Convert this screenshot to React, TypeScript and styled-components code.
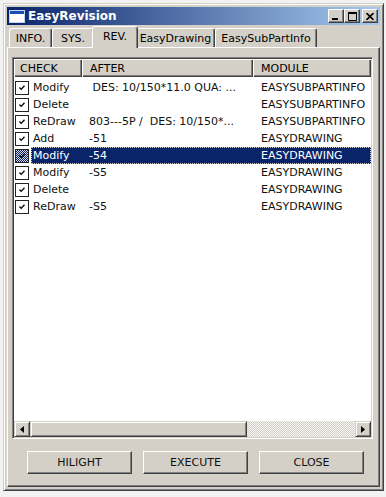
import React from 'react'
import styled, { createGlobalStyle } from 'styled-components'

const GlobalStyle = createGlobalStyle`
  html, body {
    margin: 0;
    padding: 0;
    background: #f2f2f2;
  }

  body {
    font-family: "DejaVu Sans", "Liberation Sans", sans-serif;
    font-size: 11px;
    color: #000;
  }

  * {
    box-sizing: border-box;
  }
`

const Window = styled.div`
  margin: 3px 0 0 3px;
  width: 381px;
  height: 488px;
  display: flex;
  flex-direction: column;
  padding: 3px;
  background: #d4d0c8;
  border: 1px solid;
  border-color: #d4d0c8 #404040 #404040 #d4d0c8;
  box-shadow: inset 1px 1px #fff, inset -1px -1px #808080;
`

const TitleBar = styled.div`
  height: 18px;
  display: flex;
  align-items: center;
  padding: 0 2px;
  background: linear-gradient(to right, #0a246a, #a6caf0);
  color: #fff;
`

const TitleIcon = styled.svg`
  width: 16px;
  height: 13px;
  flex-shrink: 0;
`

const TitleText = styled.span`
  margin-left: 3px;
  font-size: 12px;
  font-weight: bold;
  flex: 1;
`

const TitleButton = styled.div<{ $gap?: boolean }>`
  width: 16px;
  height: 14px;
  margin-left: ${p => (p.$gap ? '2px' : '0')};
  display: flex;
  align-items: center;
  justify-content: center;
  background: #d4d0c8;
  border: 1px solid;
  border-color: #fff #404040 #404040 #fff;
  box-shadow: inset -1px -1px #808080;
`

const TabsRow = styled.div`
  height: 21px;
  margin-top: 1px;
  display: flex;
  align-items: flex-end;
  padding-left: 2px;
`

const Tab = styled.div<{ $width: number; $active?: boolean }>`
  position: relative;
  width: ${p => p.$width + (p.$active ? 4 : 0)}px;
  height: ${p => (p.$active ? 22 : 19)}px;
  margin: 0 ${p => (p.$active ? '-2px' : '0')};
  margin-bottom: ${p => (p.$active ? '-1px' : '0')};
  z-index: ${p => (p.$active ? 1 : 0)};
  display: flex;
  justify-content: center;
  padding-top: 3px;
  background: #d4d0c8;
  border: 1px solid;
  border-bottom: none;
  border-color: #fff #404040 transparent #fff;
  border-radius: 3px 3px 0 0;
  box-shadow: inset -1px 0 #808080;
  white-space: nowrap;
`

const Panel = styled.div`
  flex: 1;
  display: flex;
  flex-direction: column;
  padding: 9px 6px 0 4px;
  border: 1px solid;
  border-color: #fff #404040 #404040 #fff;
  box-shadow: inset -1px -1px #808080;
`

const ListView = styled.div`
  height: 382px;
  display: flex;
  flex-direction: column;
  background: #fff;
  border: 1px solid;
  border-color: #808080 #fff #fff #808080;
  box-shadow: inset 1px 1px #404040, inset -1px -1px #d4d0c8;
  padding: 1px;
`

const HeaderRow = styled.div`
  display: grid;
  grid-template-columns: 68px 171px 118px;
  height: 18px;
`

const HeaderCell = styled.div<{ $pad: number }>`
  display: flex;
  align-items: center;
  padding-left: ${p => p.$pad}px;
  background: #d4d0c8;
  box-shadow: inset 1px 1px #fff, inset -1px -1px #404040, inset -2px -2px #808080;
`

const Rows = styled.div`
  flex: 1;
  padding-top: 2px;
`

const Row = styled.div`
  display: flex;
  height: 17px;
`

const CheckCell = styled.div`
  width: 17px;
  display: flex;
  align-items: center;
  padding-left: 1px;
`

const CheckBox = styled.div<{ $focus?: boolean }>`
  width: 14px;
  height: 14px;
  display: flex;
  align-items: center;
  justify-content: center;
  border: 1px solid #222;
  background: ${p =>
    p.$focus
      ? 'repeating-conic-gradient(#0a246a 0 25%, #d8d8e0 0 50%) 0 0 / 2px 2px'
      : '#fff'};
`

const RowBody = styled.div<{ $selected?: boolean }>`
  flex: 1;
  display: grid;
  grid-template-columns: 51px 171px 118px;
  align-items: center;
  background: ${p => (p.$selected ? '#0a246a' : 'transparent')};
  color: ${p => (p.$selected ? '#fff' : '#111')};
  outline: ${p => (p.$selected ? '1px dotted #d4d0c8' : 'none')};
  outline-offset: -1px;
`

const Cell = styled.div<{ $pad: number }>`
  padding-left: ${p => p.$pad}px;
  white-space: pre;
  overflow: hidden;
`

const ScrollBar = styled.div`
  height: 16px;
  display: flex;
`

const ScrollButton = styled.div`
  width: 16px;
  height: 16px;
  display: flex;
  align-items: center;
  justify-content: center;
  background: #d4d0c8;
  border: 1px solid;
  border-color: #d4d0c8 #404040 #404040 #d4d0c8;
  box-shadow: inset 1px 1px #fff, inset -1px -1px #808080;
`

const ScrollThumb = styled.div`
  width: 217px;
  background: #d4d0c8;
  border: 1px solid;
  border-color: #d4d0c8 #404040 #404040 #d4d0c8;
  box-shadow: inset 1px 1px #fff, inset -1px -1px #808080;
`

const ScrollTrack = styled.div`
  flex: 1;
  background: repeating-conic-gradient(#d4d0c8 0 25%, #f4f4f4 0 50%) 0 0 / 2px 2px;
`

const ButtonRow = styled.div`
  display: flex;
  gap: 11px;
  margin-top: 12px;
  padding-left: 15px;
`

const PushButton = styled.div`
  width: 105px;
  height: 23px;
  display: flex;
  align-items: center;
  justify-content: center;
  background: #d4d0c8;
  border: 1px solid;
  border-color: #fff #404040 #404040 #fff;
  box-shadow: inset -1px -1px #808080;
  color: #111;
`

type Item = {
  action: string
  after: string
  module: string
  selected?: boolean
}

const items: Item[] = [
  { action: 'Modify', after: ' DES: 10/150*11.0 QUA: ...', module: 'EASYSUBPARTINFO' },
  { action: 'Delete', after: '', module: 'EASYSUBPARTINFO' },
  { action: 'ReDraw', after: '803---5P /  DES: 10/150*...', module: 'EASYSUBPARTINFO' },
  { action: 'Add', after: '-51', module: 'EASYDRAWING' },
  { action: 'Modify', after: '-54', module: 'EASYDRAWING', selected: true },
  { action: 'Modify', after: '-S5', module: 'EASYDRAWING' },
  { action: 'Delete', after: '', module: 'EASYDRAWING' },
  { action: 'ReDraw', after: '-S5', module: 'EASYDRAWING' },
]

const tabs = [
  { label: 'INFO.', width: 43 },
  { label: 'SYS.', width: 42 },
  { label: 'REV.', width: 42, active: true },
  { label: 'EasyDrawing', width: 79 },
  { label: 'EasySubPartInfo', width: 102 },
]

const Check = () => (
  <svg width="6" height="6" viewBox="0 0 6 6">
    <path d="M0.5 2.5 L2.2 4.4 L5.5 0.8" stroke="#000" strokeWidth="1.3" fill="none" />
  </svg>
)

const Arrow: React.FC<{ dir: 'left' | 'right' }> = ({ dir }) => (
  <svg width="4" height="7" viewBox="0 0 4 7">
    {dir === 'left'
      ? <path d="M4 0 L0 3.5 L4 7 Z" fill="#000" />
      : <path d="M0 0 L4 3.5 L0 7 Z" fill="#000" />}
  </svg>
)

const App: React.FC = () => {
  return (
    <>
      <GlobalStyle />
      <Window>
        <TitleBar>
          <TitleIcon viewBox="0 0 16 13">
            <rect x="0.5" y="0.5" width="15" height="12" fill="#fff" stroke="#c8d4e8" />
            <rect x="1" y="1" width="14" height="3" fill="#1c4cb8" />
          </TitleIcon>
          <TitleText>EasyRevision</TitleText>
          <TitleButton>
            <svg width="8" height="8" viewBox="0 0 8 8">
              <rect x="0" y="6" width="6" height="2" fill="#000" />
            </svg>
          </TitleButton>
          <TitleButton>
            <svg width="9" height="9" viewBox="0 0 9 9">
              <path d="M0.5 1.5 H8.5 V8.5 H0.5 Z" fill="none" stroke="#000" />
              <rect x="0" y="0" width="9" height="2" fill="#000" />
            </svg>
          </TitleButton>
          <TitleButton $gap>
            <svg width="8" height="7" viewBox="0 0 8 7">
              <path d="M0.5 0 L7.5 7 M7.5 0 L0.5 7" stroke="#000" strokeWidth="1.6" />
            </svg>
          </TitleButton>
        </TitleBar>

        <TabsRow>
          {tabs.map(t => (
            <Tab key={t.label} $width={t.width} $active={t.active}>
              {t.label}
            </Tab>
          ))}
        </TabsRow>

        <Panel>
          <ListView>
            <HeaderRow>
              <HeaderCell $pad={6}>CHECK</HeaderCell>
              <HeaderCell $pad={8}>AFTER</HeaderCell>
              <HeaderCell $pad={8}>MODULE</HeaderCell>
            </HeaderRow>
            <Rows>
              {items.map((item, index) => (
                <Row key={index}>
                  <CheckCell>
                    <CheckBox $focus={item.selected}>
                      <Check />
                    </CheckBox>
                  </CheckCell>
                  <RowBody $selected={item.selected}>
                    <Cell $pad={2}>{item.action}</Cell>
                    <Cell $pad={7}>{item.after}</Cell>
                    <Cell $pad={8}>{item.module}</Cell>
                  </RowBody>
                </Row>
              ))}
            </Rows>
            <ScrollBar>
              <ScrollButton><Arrow dir="left" /></ScrollButton>
              <ScrollThumb />
              <ScrollTrack />
              <ScrollButton><Arrow dir="right" /></ScrollButton>
            </ScrollBar>
          </ListView>

          <ButtonRow>
            <PushButton>HILIGHT</PushButton>
            <PushButton>EXECUTE</PushButton>
            <PushButton>CLOSE</PushButton>
          </ButtonRow>
        </Panel>
      </Window>
    </>
  )
}

export default App
